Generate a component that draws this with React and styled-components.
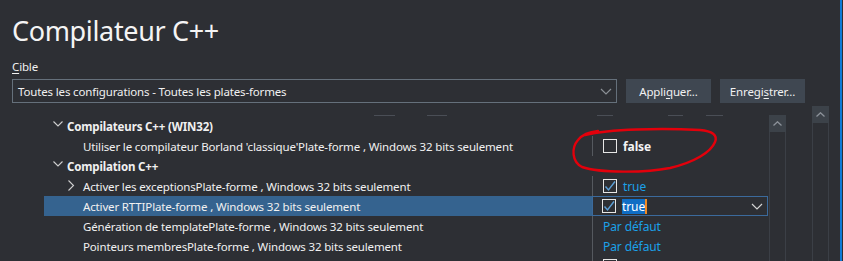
import React from "react";
import styled, { createGlobalStyle } from "styled-components";

const Global = createGlobalStyle`
  html, body { margin: 0; padding: 0; background: #2d2f34; }
  body { font-family: "Noto Sans", "Open Sans", sans-serif; color: #f1f1f1; }
  * { box-sizing: border-box; }
`;

const Root = styled.div`
  position: relative;
  width: 842px;
  height: 261px;
  overflow: hidden;
  background: #2d2f34;
  border-right: 2px solid #0e7ad6;
  display: flex;
  flex-direction: column;
  font-size: 11.5px;
  letter-spacing: -0.15px;
`;

const Header = styled.div`
  padding-left: 12px;
`;

const Title = styled.h1`
  margin: 0;
  padding-top: 12px;
  font-size: 27px;
  line-height: 38px;
  font-weight: 400;
  color: #f4f4f4;
  letter-spacing: -0.35px;
`;

const Label = styled.div`
  margin-top: 9px;
  line-height: 16px;
  color: #f1f1f1;
`;

const U = styled.span`
  text-decoration: underline;
  text-underline-offset: 2px;
`;

const TargetRow = styled.div`
  margin-top: 4px;
  display: flex;
  align-items: flex-end;
  gap: 9px;
`;

const Select = styled.div`
  width: 605px;
  height: 24px;
  border: 1px solid #65707b;
  display: flex;
  align-items: center;
  justify-content: space-between;
  padding: 0 4px 0 5px;
  color: #f1f1f1;
`;

const Button = styled.div`
  width: 85px;
  height: 24px;
  background: #3f4751;
  display: flex;
  align-items: center;
  justify-content: center;
  color: #f1f1f1;
`;

const Lower = styled.div`
  display: flex;
  align-items: flex-start;
  margin-top: 3px;
`;

const Grid = styled.div`
  margin-left: 44px;
  margin-top: 9px;
  display: flex;
  align-items: flex-start;
  gap: 1px;
`;

const Table = styled.div`
  width: 724px;
  display: flex;
  flex-direction: column;
`;

const HeaderStrip = styled.div`
  height: 1px;
  display: flex;
`;

const Seg = styled.div`
  height: 1px;
  width: ${(p) => p.$w}px;
  margin-left: ${(p) => p.$ml}px;
  background: #4a4e56;
`;

const Row = styled.div`
  display: grid;
  grid-template-columns: 548px 176px;
  height: 20px;
  flex-shrink: 0;
`;

const NameCell = styled.div`
  display: flex;
  align-items: center;
  height: 20px;
  font-weight: ${(p) => (p.$group ? 700 : 400)};
  background: ${(p) => (p.$selected ? "#35638f" : "transparent")};
  white-space: nowrap;
  color: #f1f1f1;
`;

const Toggle = styled.div`
  width: 16px;
  height: 20px;
  margin-left: ${(p) => p.$ml}px;
  margin-right: 1px;
  flex-shrink: 0;
  display: flex;
`;

const ValueCell = styled.div`
  height: 20px;
  display: flex;
  align-items: center;
  gap: 6px;
  padding-left: 10px;
  padding-right: 4px;
  font-size: 12px;
  letter-spacing: -0.1px;
  border-left: 1px solid ${(p) => (p.$line ? "#55595f" : "transparent")};
  ${(p) =>
    p.$editor &&
    `
    border: 1px solid #3b6a9c;
    padding-left: 9px;
  `}
`;

const ValueText = styled.span`
  color: ${(p) => (p.$plain ? "#f4f4f4" : "#1ba1e8")};
  font-weight: ${(p) => (p.$bold ? 700 : 400)};
`;

const SelText = styled.span`
  background: #0f6dc4;
  color: #ffffff;
  line-height: 15px;
  border-right: 2px solid #f08a24;
`;

const Box = styled.div`
  width: 14px;
  height: 14px;
  border: 1px solid #e6e6e6;
  flex-shrink: 0;
  display: flex;
`;

const Spacer = styled.div`
  flex: 1;
`;

const Scrollbar = styled.div`
  width: 17px;
  height: ${(p) => p.$h}px;
  margin-left: ${(p) => p.$ml || 0}px;
  border-left: 1px solid #3b3f46;
  border-right: 1px solid #3b3f46;
  flex-shrink: 0;
`;

const ScrollBtn = styled.div`
  height: 17px;
  margin: 0 -1px;
  background: #3c4249;
  display: flex;
  align-items: center;
  justify-content: center;
`;

const Annotation = styled.svg`
  position: absolute;
  left: 0;
  top: 0;
  pointer-events: none;
`;

const DownChevron = ({ color = "#c8c8c8" }) => (
  <svg width="12" height="7" viewBox="0 0 12 7">
    <path d="M1 1 L6 6 L11 1" fill="none" stroke={color} strokeWidth="1.2" />
  </svg>
);

const UpCaret = () => (
  <svg width="9" height="5" viewBox="0 0 9 5">
    <path d="M0.5 4.5 L4.5 0.8 L8.5 4.5" fill="none" stroke="#8d939b" strokeWidth="1.3" />
  </svg>
);

const Expander = ({ open }) => (
  <svg width="16" height="20" viewBox="0 0 16 20">
    {open ? (
      <path d="M3.5 5.5 L8 10 L12.5 5.5" fill="none" stroke="#cfcfcf" strokeWidth="1.1" />
    ) : (
      <path d="M2.5 4.5 L7.5 9.5 L2.5 14.5" fill="none" stroke="#cfcfcf" strokeWidth="1.1" />
    )}
  </svg>
);

const CheckBox = ({ checked }) => (
  <Box>
    {checked && (
      <svg width="12" height="12" viewBox="0 0 12 12">
        <path d="M1.5 6.5 L4.5 10 L11 1.5" fill="none" stroke="#5c9fd6" strokeWidth="1.4" />
      </svg>
    )}
  </Box>
);

const rows = [
  { name: "Compilateurs C++ (WIN32)", group: true },
  {
    name: "Utiliser le compilateur Borland 'classique'Plate-forme , Windows 32 bits seulement",
    value: { type: "check", checked: false, text: "false", plain: true, bold: true },
  },
  { name: "Compilation C++", group: true },
  {
    name: "Activer les exceptionsPlate-forme , Windows 32 bits seulement",
    expander: true,
    value: { type: "check", checked: true, text: "true" },
  },
  {
    name: "Activer RTTIPlate-forme , Windows 32 bits seulement",
    selected: true,
    value: { type: "editor", checked: true, text: "true" },
  },
  {
    name: "Génération de templatePlate-forme , Windows 32 bits seulement",
    value: { type: "text", text: "Par défaut" },
  },
  {
    name: "Pointeurs membresPlate-forme , Windows 32 bits seulement",
    value: { type: "text", text: "Par défaut" },
  },
  { name: "", value: { type: "check", checked: false, text: "" } },
];

const Value = ({ v }) => {
  if (!v) return <ValueCell />;
  if (v.type === "text")
    return (
      <ValueCell $line>
        <ValueText>{v.text}</ValueText>
      </ValueCell>
    );
  if (v.type === "editor")
    return (
      <ValueCell $editor>
        <CheckBox checked={v.checked} />
        <SelText>{v.text}</SelText>
        <Spacer />
        <DownChevron color="#d4d4d4" />
      </ValueCell>
    );
  return (
    <ValueCell $line>
      <CheckBox checked={v.checked} />
      <ValueText $plain={v.plain} $bold={v.bold}>
        {v.text}
      </ValueText>
    </ValueCell>
  );
};

export default function App() {
  return (
    <Root>
      <Global />
      <Header>
        <Title>Compilateur C++</Title>
        <Label>
          <U>C</U>ible
        </Label>
        <TargetRow>
          <Select>
            <span>Toutes les configurations - Toutes les plates-formes</span>
            <DownChevron color="#8b9096" />
          </Select>
          <Button>
            Appli<U>q</U>uer...
          </Button>
          <Button>
            Enregi<U>s</U>trer...
          </Button>
        </TargetRow>
      </Header>
      <Lower>
        <Grid>
          <Table>
            <HeaderStrip>
              <Seg $ml={330} $w={21} />
              <Seg $ml={32} $w={20} />
              <Seg $ml={150} $w={16} />
              <Seg $ml={55} $w={15} />
              <Seg $ml={23} $w={17} />
            </HeaderStrip>
            {rows.map((r, i) => (
              <Row key={i}>
                <NameCell $group={r.group} $selected={r.selected}>
                  <Toggle $ml={r.group ? 6 : 22}>
                    {r.group ? <Expander open /> : r.expander ? <Expander /> : null}
                  </Toggle>
                  {r.name}
                </NameCell>
                {r.group ? <ValueCell /> : <Value v={r.value} />}
              </Row>
            ))}
          </Table>
          <Scrollbar $h={150}>
            <ScrollBtn>
              <UpCaret />
            </ScrollBtn>
          </Scrollbar>
        </Grid>
        <Scrollbar $ml={26} $h={160}>
          <ScrollBtn>
            <UpCaret />
          </ScrollBtn>
        </Scrollbar>
      </Lower>
      <Annotation width="843" height="261" viewBox="0 0 843 261">
        <path
          d="M585 135 C 610 129, 660 128, 700 130 C 712 131, 718 135, 715 142 C 711 152, 695 162, 670 168 C 645 173, 600 173, 582 167 C 572 162, 571 148, 578 140 C 582 135, 588 132, 598 131"
          fill="none"
          stroke="#e3000b"
          strokeWidth="2.4"
          strokeLinecap="round"
        />
      </Annotation>
    </Root>
  );
}
